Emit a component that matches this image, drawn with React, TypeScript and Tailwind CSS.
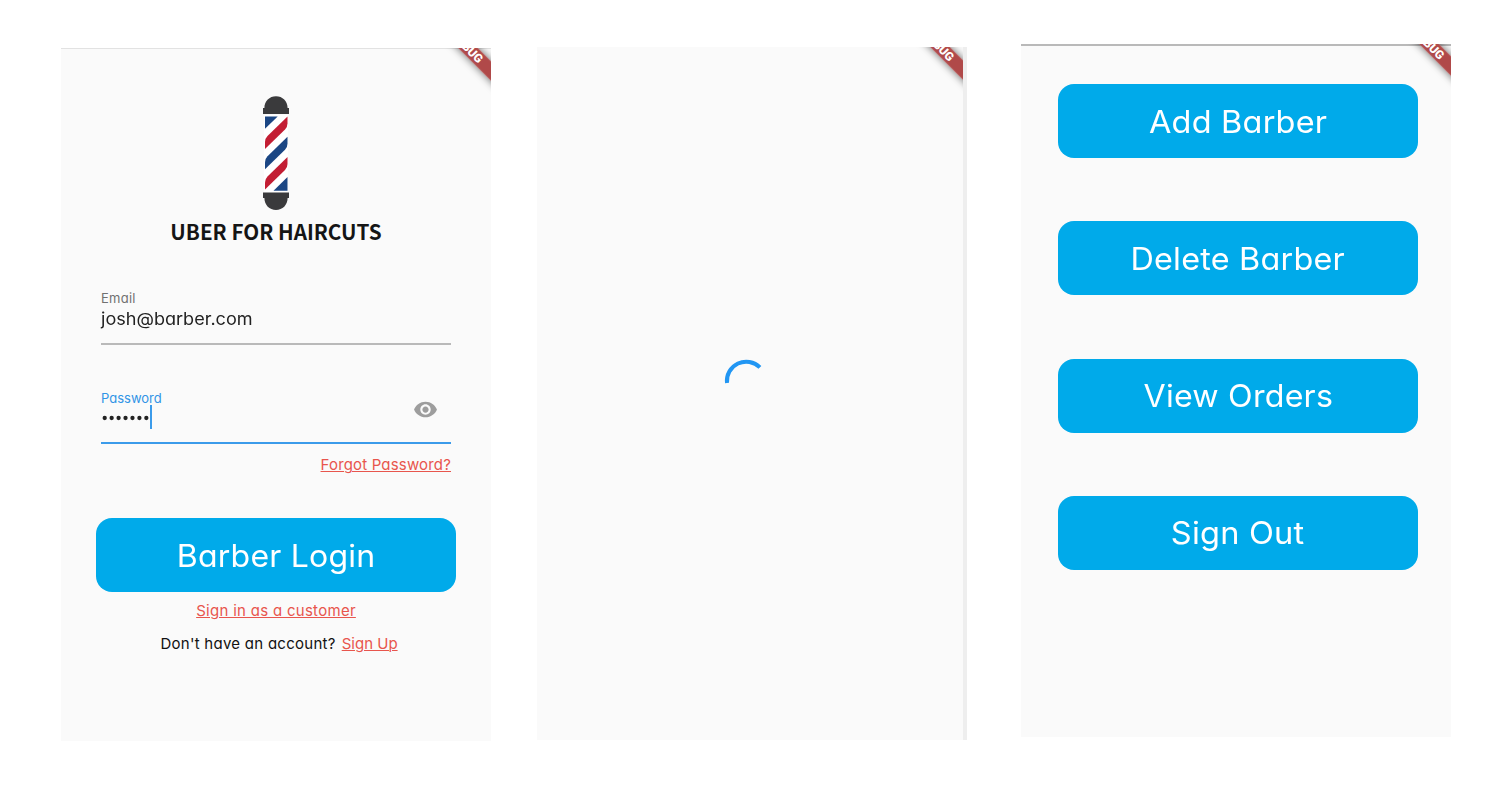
import React from "react";

function DebugRibbon({ className, x, y, start }: { className: string; x: number; y: number; start: number }) {
  const id = "ribbon" + x + start;
  return (
    <svg className={className} width="70" height="60" viewBox="0 0 70 60">
      <defs>
        <filter id={id} x="-50%" y="-200%" width="200%" height="500%">
          <feDropShadow dx="0" dy="0" stdDeviation="4" floodColor="#000" floodOpacity="0.6" />
        </filter>
      </defs>
      <g transform={`translate(${x} ${y}) rotate(45)`}>
        <rect x="-60" y="-6.8" width="120" height="13.6" fill="#b04a4a" filter={"url(#" + id + ")"} />
        <text x={start} y="4.2" fontFamily="Roboto, sans-serif" fontWeight="900" fontSize="12" fill="#fff" textLength="38">
          DEBUG
        </text>
      </g>
    </svg>
  );
}

function BarberPole() {
  return (
    <svg width="30" height="116" viewBox="261 95 30 116">
      <path d="M263 114v-6h1.4C264.400 101 269.500 96.200 276 96.200S287.600 101 287.600 108H289v6z" fill="#3a3a3c" />
      <path d="M263 192.500h26v5.500h-1.400C287.600 205 282.500 210 276 210S264.400 205 264.400 198H263z" fill="#3a3a3c" />
      <path d="M264 115h24v77h-24z" fill="#fff" />
      <path d="M265 116.500h12.700L265 128.800z" fill="#1b4684" />
      <path d="M287.500 116.500v7q0 3.500-2.500 6L265 149v-7q0-3.500 2.500-6z" fill="#c31d33" />
      <path d="M287.500 136.700v7q0 3.500-2.500 6L265 169.200v-7q0-3.500 2.500-6z" fill="#1b4684" />
      <path d="M287.500 157v7q0 3.500-2.500 6L265 189.500v-7q0-3.500 2.500-6z" fill="#c31d33" />
      <path d="M287.500 177v13.700H273.500z" fill="#1b4684" />
    </svg>
  );
}

function BigButton({ label, className }: { label: string; className: string }) {
  return (
    <button className="flex h-[74px] w-[360px] shrink-0 items-center justify-center rounded-2xl bg-[#00aaea] text-[31px] leading-none font-normal whitespace-nowrap text-white">
      <span className={className}>{label}</span>
    </button>
  );
}

export default function App() {
  return (
    <main className="flex h-[807px] w-[1501px] items-start overflow-hidden bg-white font-['Inter',sans-serif] [font-feature-settings:'cv11']">
      <section className="relative mt-12 ml-[61px] flex h-[693px] w-[430px] flex-col items-center overflow-hidden bg-[#fafafa]">
        <div className="h-px w-full shrink-0 bg-[#e2e2e2]" />
        <DebugRibbon className="absolute top-0 right-0" x={50} y={3} start={-24} />
        <div className="mt-[46px] h-[116px]">
          <BarberPole />
        </div>
        <h1 className="mt-1 h-8 text-[20.700px] leading-8 font-bold whitespace-nowrap text-[#151515] [font-family:'Noto_Sans_CJK_SC',sans-serif]">
          UBER FOR HAIRCUTS
        </h1>
        <div className="mt-[43px] flex h-[55px] w-[350px] flex-col border-b-2 border-[#b9b9b9]">
          <label className="h-4 text-[13px] leading-4 tracking-[0.25px] text-[#717171]">Email</label>
          <span className="mt-px origin-left scale-x-[1.063] text-[17px] leading-6 text-[#222]">josh@barber.com</span>
        </div>
        <div className="mt-[45px] flex h-[54px] w-[350px] items-start justify-between border-b-2 border-[#3b9bea]">
          <div>
            <label className="block h-4 text-[13px] leading-4 text-[#3194e6]">Password</label>
            <div className="flex h-6 items-center">
              <svg className="shrink-0" width="49" height="8" viewBox="0 0 49 8" fill="#222">
                {[0, 1, 2, 3, 4, 5, 6].map((n) => (
                  <circle key={n} cx={3.700 + n * 6.940} cy="4" r="2.150" />
                ))}
              </svg>
              <i className="mb-0.5 h-6 w-0.5 shrink-0 bg-[#3b9bea]" />
            </div>
          </div>
          <svg className="mt-[7px] mr-[13px]" width="25" height="25" viewBox="0 0 24 24" fill="#9d9d9d">
            <path d="M12 4.500C7 4.500 2.730 7.610 1 12c1.730 4.390 6 7.500 11 7.500s9.270-3.110 11-7.500c-1.730-4.390-6-7.500-11-7.500zM12 17c-2.760 0-5-2.240-5-5s2.240-5 5-5 5 2.240 5 5-2.240 5-5 5zm0-8c-1.660 0-3 1.340-3 3s1.340 3 3 3 3-1.340 3-3-1.340-3-3-3z" />
          </svg>
        </div>
        <a className="mt-[11px] mr-10 h-5 self-end text-[15px] leading-5 tracking-[0.170px] whitespace-nowrap text-[#e8554d] underline decoration-1 underline-offset-1">
          Forgot Password?
        </a>
        <div className="mt-[43px]">
          <BigButton label="Barber Login" className="scale-x-[1.033] tracking-[0.2px]" />
        </div>
        <a className="mt-[9px] h-5 text-[15px] leading-5 tracking-[0.290px] whitespace-nowrap text-[#e8554d] underline decoration-1 underline-offset-1">
          Sign in as a customer
        </a>
        <p className="mt-[13px] ml-1.5 flex h-5 gap-1.5 text-[15px] leading-5 whitespace-nowrap text-[#111]">
          <span className="tracking-[0.270px]">Don't have an account?</span>
          <a className="text-[#e8554d] underline decoration-1 underline-offset-1">Sign Up</a>
        </p>
      </section>

      <section className="relative mt-[47px] ml-[46px] flex h-[693px] w-[430px] justify-center overflow-hidden border-r-4 border-[#eee] bg-[#fafafa]">
        <DebugRibbon className="absolute top-0 right-0" x={48} y={1} start={-22.5} />
        <svg className="mt-[311px] mr-3" width="42" height="42" viewBox="0 0 42 42" fill="none">
          <path d="M4 25A19.300 19.300 0 0 1 36.900 9.400" stroke="#2196f3" strokeWidth="4" />
        </svg>
      </section>

      <section className="relative mt-11 ml-[54px] flex h-[693px] w-[430px] flex-col overflow-hidden bg-[#fafafa]">
        <div className="h-0.5 w-full shrink-0 bg-[#b9b9b9]" />
        <DebugRibbon className="absolute top-0 right-0" x={50} y={2} start={-22} />
        <div className="flex flex-col gap-[63.200px] pt-[38.200px] pl-[37px]">
          <BigButton label="Add Barber" className="scale-x-[1.047] tracking-[0.2px]" />
          <BigButton label="Delete Barber" className="scale-x-[1.044] tracking-[0.2px]" />
          <BigButton label="View Orders" className="scale-x-[1.038] tracking-[0.2px]" />
          <BigButton label="Sign Out" className="scale-x-[1.050] tracking-[0.2px]" />
        </div>
      </section>
    </main>
  );
}
